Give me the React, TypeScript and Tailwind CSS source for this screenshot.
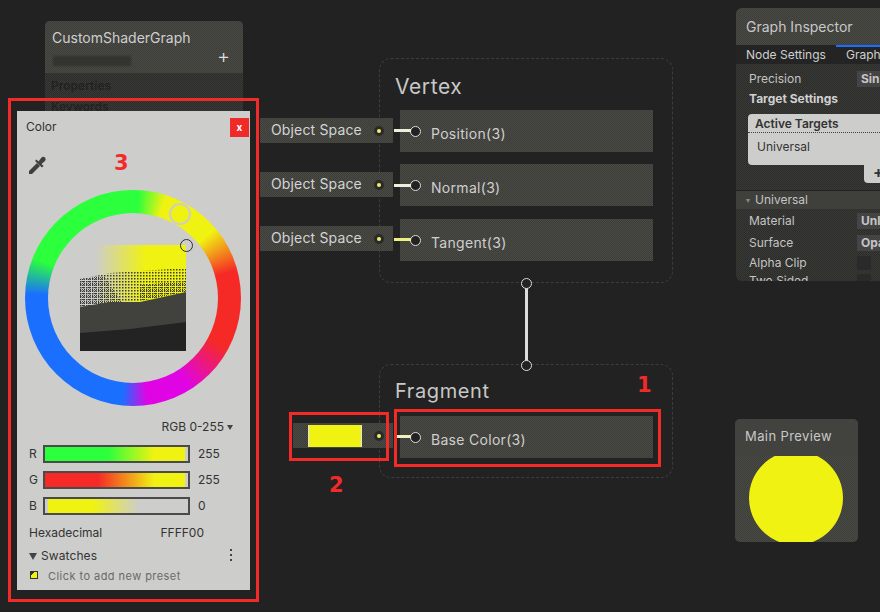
import React from "react";

// 1px checker standing in for the dithered panels of the capture
const panel =
  "bg-[repeating-conic-gradient(#4b4b46_0_25%,#3c3c38_0_50%)] bg-[length:2px_2px]";
const darkPanel =
  "bg-[repeating-conic-gradient(#3a3a37_0_25%,#2b2b29_0_50%)] bg-[length:2px_2px]";

function Port({ className = "" }: { className?: string }) {
  return (
    <span
      className={`block w-[11px] h-[11px] rounded-full border-[1.5px] border-[#dcdcdc] bg-[#222] shrink-0 ${className}`}
    />
  );
}

function OutDot({ className = "" }: { className?: string }) {
  return (
    <span
      className={`absolute w-[10px] h-[10px] rounded-full bg-[#2a2a2a] flex items-center justify-center ${className}`}
    >
      <span className="w-[4px] h-[4px] rounded-full bg-[#f0f060]" />
    </span>
  );
}

function BlockRow({ label, className = "" }: { label: string; className?: string }) {
  return (
    <div className={`${panel} h-[42px] flex items-center pl-[10px] gap-[10px] ${className}`}>
      <Port />
      <span className="text-[14px] text-[#cfcfcf] tracking-[0.3px] pt-[5px]">{label}</span>
    </div>
  );
}

function ObjectSpaceNode({ className }: { className: string }) {
  return (
    <div className={`absolute left-[260px] w-[133px] h-[25px] ${panel} flex items-center pl-[11px] pb-[3px] ${className}`}>
      <span className="text-[14px] text-[#d4d4d4] tracking-[0.15px]">Object Space</span>
      <OutDot className="left-[114px] top-[8px]" />
    </div>
  );
}

function Slider({ label, value, fill, gap }: { label: string; value: string; fill: string; gap?: boolean }) {
  return (
    <div className="flex items-center h-[18px]">
      <span className="w-[26px] pl-[12px] text-[12px] text-[#333]">{label}</span>
      <div className={`w-[147px] h-[18px] border-2 border-[#4a4a4a] ${gap ? "pl-[3px]" : "pr-[3px]"}`}>
        <div className={`h-full ${fill}`} />
      </div>
      <span className="pl-[8px] text-[12px] text-[#333]">{value}</span>
    </div>
  );
}

function ColorSquare() {
  return (
    <svg width="106" height="106" viewBox="0 0 106 106" className="block">
      <defs>
        <linearGradient id="sv" x1="0" y1="0" x2="1" y2="0">
          <stop offset="0.15" stopColor="#cdcdcb" />
          <stop offset="0.62" stopColor="#f0f212" />
        </linearGradient>
        <pattern id="dots" width="3" height="3" patternUnits="userSpaceOnUse">
          <rect width="1.5" height="1.5" fill="#3c3c38" />
        </pattern>
        <pattern id="dotsDense" width="2" height="2" patternUnits="userSpaceOnUse">
          <rect width="1" height="1" fill="#3c3c38" />
        </pattern>
      </defs>
      <rect width="106" height="106" fill="url(#sv)" />
      <polygon points="0,34 30,28 106,23 106,47 60,56 0,62" fill="url(#dots)" />
      <polygon points="0,34 24,31 42,58 0,62" fill="url(#dotsDense)" />
      <polygon points="60,40 106,36 106,47 60,56" fill="url(#dotsDense)" />
      <polygon points="0,62 30,57 60,57 106,47 106,106 0,106" fill="#41413d" />
      <polygon points="0,88 50,84 106,77 106,106 0,106" fill="#232323" />
    </svg>
  );
}

function ColorPicker() {
  return (
    <div className="absolute left-[17px] top-[111px] w-[233px] h-[479px] bg-[#cdcdcb] flex flex-col">
      <div className="flex justify-between items-start pt-[7px] pr-[1px] pl-[9px] h-[44px]">
        <span className="text-[12px] text-[#333]">Color</span>
        <span className="w-[19px] h-[19px] bg-[#f02a28] text-white text-[10px] font-bold flex items-center justify-center">x</span>
      </div>
      <div className="h-[35px] pl-[12px]">
        <svg width="18" height="19" viewBox="0 0 18 19" className="block mt-[1px]">
          <path d="M0 18 L0 15 L8 7 L11 10 L3 18 Z" fill="#3f3f3f" />
          <path d="M6 5 L7.5 3.5 L9.5 5.5 L12.5 1.5 Q14.5 0 16 1.5 Q17.5 3 16 5 L12.5 8 L14.5 10 L13 11.5 Z" fill="#3f3f3f" />
        </svg>
      </div>
      <div className="relative ml-[8px] w-[216px] h-[216px] rounded-full bg-[conic-gradient(#2cff3c_0deg,#2cff3c_3deg,#f0f212_18deg,#f0f212_50deg,#f52a26_75deg,#f52a26_118deg,#e004e4_148deg,#e004e4_172deg,#1a6fff_186deg,#1a6fff_272deg,#2cff3c_292deg,#2cff3c_360deg)] flex items-center justify-center">
        <div className="w-[170px] h-[170px] rounded-full bg-[#cdcdcb] flex items-center justify-center">
          <ColorSquare />
        </div>
        <span className="absolute left-[144px] top-[13px] w-[22px] h-[22px] rounded-full border-2 border-[#cdcdcb] bg-[#f0f212]" />
        <span className="absolute left-[155px] top-[49px] w-[13px] h-[13px] rounded-full border-[1.5px] border-[#2f2f2f]" />
      </div>
      <div className="flex justify-end items-center mt-[13px] pr-[17px] h-[16px]">
        <span className="text-[12px] text-[#333]">RGB 0-255</span>
        <span className="ml-[3px] w-0 h-0 border-l-[3.5px] border-r-[3.5px] border-t-[5px] border-l-transparent border-r-transparent border-t-[#444]" />
      </div>
      <div className="flex flex-col gap-[8px] mt-[10px]">
        <Slider label="R" value="255" fill="bg-[linear-gradient(to_right,#2cff3c_45%,#f0f212_78%)]" />
        <Slider label="G" value="255" fill="bg-[linear-gradient(to_right,#f52a26_38%,#f0f212_78%)]" />
        <Slider label="B" value="0" gap fill="bg-[linear-gradient(to_right,#f0f212_32%,#cdcdcb_65%)]" />
      </div>
      <div className="flex items-center justify-between mt-[11px] pl-[12px] pr-[46px] h-[14px] text-[12px] text-[#333]">
        <span>Hexadecimal</span>
        <span>FFFF00</span>
      </div>
      <div className="flex items-center mt-[9px] pl-[12px] pr-[17px] h-[14px]">
        <span className="w-0 h-0 border-l-[4px] border-r-[4px] border-t-[7px] border-l-transparent border-r-transparent border-t-[#444]" />
        <span className="ml-[4px] text-[12px] tracking-[0.1px] text-[#333]">Swatches</span>
        <svg width="4" height="12" viewBox="0 0 4 12" className="ml-auto -mt-[3px]">
          <rect x="1" y="0" width="2" height="2" fill="#444" />
          <rect x="1" y="5" width="2" height="2" fill="#444" />
          <rect x="1" y="10" width="2" height="2" fill="#444" />
        </svg>
      </div>
      <div className="flex items-center mt-[6px] pl-[13px] h-[14px]">
        <span className="w-[8px] h-[8px] -mt-[3px] border border-[#333] bg-[linear-gradient(135deg,#333_30%,#f0f212_30%)]" />
        <span className="ml-[10px] text-[11px] tracking-[0.45px] text-[#6a6a6a]">Click to add new preset</span>
      </div>
    </div>
  );
}

function Inspector() {
  return (
    <div className="absolute left-[736px] top-[8px] w-[160px] h-[273px] rounded-[6px] overflow-hidden bg-[#2c2c2a] flex flex-col">
      <div className={`${panel} h-[37px] shrink-0 pl-[10px] flex items-center text-[14px] text-[#c8c8c8]`}>Graph Inspector</div>
      <div className="relative h-[19px] shrink-0 bg-[#242424] flex items-center text-[12px] text-[#cfcfcf]">
        <span className="pl-[10px] w-[100px]">Node Settings</span>
        <span className="pl-[10px]">Graph</span>
        <span className="absolute left-[100px] top-0 right-0 h-[2px] bg-[#1a6fff]" />
      </div>
      <div className={`${darkPanel} flex-1 min-h-0 flex flex-col text-[12px] text-[#c4c4c4]`}>
        <div className="flex items-center justify-between h-[26px] shrink-0 pl-[13px] pt-[3px]">
          <span>Precision</span>
          <span className="w-[39px] h-[16px] pl-[4px] bg-[#444] font-bold leading-[16px]">Sin</span>
        </div>
        <div className="h-[17px] shrink-0 pl-[13px] font-bold text-[#d0d0d0]">Target Settings</div>
        <div className="mt-[7px] ml-[12px] h-[51px] shrink-0 rounded-l-[4px] bg-[#cdcdcb] text-[#333]">
          <div className="h-[19px] pl-[7px] font-semibold leading-[19px] border-b border-dotted border-[#444]">Active Targets</div>
          <div className="pl-[9px] pt-[5px]">Universal</div>
        </div>
        <div className="ml-[128px] h-[18px] shrink-0 rounded-bl-[4px] bg-[#cdcdcb] text-[#333] font-bold text-[16px] leading-[14px] pl-[9px]">+</div>
        <div className="mt-[7px] h-[19px] shrink-0 bg-[#3f3f3c] pl-[10px] flex items-center gap-[5px] border-t border-[#222]">
          <span className="text-[8px] text-[#888]">▾</span>
          <span>Universal</span>
        </div>
        <div className="flex items-center justify-between h-[22px] shrink-0 mt-[1px] pl-[13px]">
          <span>Material</span>
          <span className="w-[39px] h-[16px] pl-[4px] bg-[#444] font-bold leading-[16px]">Unl</span>
        </div>
        <div className="flex items-center justify-between h-[22px] shrink-0 pl-[13px]">
          <span>Surface</span>
          <span className="w-[39px] h-[16px] pl-[4px] bg-[#444] font-bold leading-[16px]">Opa</span>
        </div>
        <div className="flex items-center justify-between h-[18px] shrink-0 pl-[13px]">
          <span>Alpha Clip</span>
          <span className="w-[14px] h-[14px] mr-[25px] bg-[#2a2a2a]" />
        </div>
        <div className="flex items-center justify-between h-[18px] shrink-0 pl-[13px]">
          <span>Two Sided</span>
          <span className="w-[14px] h-[14px] mr-[25px] bg-[#2a2a2a]" />
        </div>
      </div>
    </div>
  );
}

export default function App() {
  return (
    <div className="relative w-[880px] h-[612px] overflow-hidden bg-[#222222] font-['Inter',sans-serif]">
      {/* blackboard, mostly hidden behind the picker */}
      <div className={`absolute left-[45px] top-[21px] w-[198px] h-[100px] rounded-t-[5px] ${darkPanel}`}>
        <div className={`${panel} relative h-[52px] pl-[7px] pt-[6px] rounded-t-[5px] text-[14px] text-[#cfcfcf]`}>
          CustomShaderGraph
          <span className="absolute left-[8px] top-[35px] w-[78px] h-[10px] bg-[#33332f] blur-[1px]" />
          <span className="absolute right-[13px] top-[20px] text-[20px] font-light text-[#ddd]">+</span>
        </div>
        <div className="pl-[6px] pt-[2px] text-[12px] font-semibold text-[#222] leading-[21px]">
          Properties
          <br />
          Keywords
        </div>
      </div>

      {/* vertex block */}
      <div className="absolute left-[379px] top-[58px] w-[294px] h-[225px] rounded-[12px] border border-dashed border-[#3d3d3d] pl-[20px] pr-[19px]">
        <div className="h-[51px] -ml-[5px] pt-[12px] text-[21px] tracking-[0.6px] text-[#c8c8c8]">Vertex</div>
        <div className="flex flex-col gap-[12px]">
          <BlockRow label="Position(3)" />
          <BlockRow label="Normal(3)" />
          <BlockRow label="Tangent(3)" className="mt-[1px]" />
        </div>
      </div>

      {/* fragment block */}
      <div className="absolute left-[379px] top-[364px] w-[294px] h-[114px] rounded-[12px] border border-dashed border-[#3d3d3d] pl-[20px] pr-[19px]">
        <div className="h-[51px] -ml-[5px] pt-[11px] text-[20px] tracking-[0.6px] text-[#c8c8c8]">Fragment</div>
        <BlockRow label="Base Color(3)" />
      </div>

      <ObjectSpaceNode className="top-[118px]" />
      <ObjectSpaceNode className="top-[172px]" />
      <ObjectSpaceNode className="top-[226px]" />

      {/* wires */}
      <div className="absolute left-[394px] top-[129px] w-[17px] h-[3px] bg-[#f0f0d8]" />
      <div className="absolute left-[394px] top-[184px] w-[17px] h-[3px] bg-[#f0f0d8]" />
      <div className="absolute left-[394px] top-[238px] w-[17px] h-[3px] bg-[#f0f080]" />
      <div className="absolute left-[397px] top-[435px] w-[14px] h-[3px] bg-[#f0f0c0]" />
      <div className="absolute left-[525px] top-[286px] w-[3px] h-[76px] bg-[#dcdcdc]" />
      <Port className="absolute left-[521px] top-[278px]" />
      <Port className="absolute left-[521px] top-[360px]" />

      {/* color property node */}
      <div className={`absolute left-[293px] top-[423px] w-[100px] h-[25px] ${panel}`}>
        <div className="absolute left-[15px] top-[2px] w-[54px] h-[22px] bg-[#f0f212] border-x border-[#e4e4e4]" />
        <OutDot className="left-[81px] top-[8px]" />
      </div>

      {/* main preview */}
      <div className={`absolute left-[735px] top-[419px] w-[123px] h-[123px] rounded-[5px] overflow-hidden ${panel}`}>
        <div className="relative z-10 h-[37px] bg-[#42423f] pl-[10px] pb-[2px] flex items-center text-[13px] tracking-[0.4px] text-[#c8c8c8]">Main Preview</div>
        <div className="w-[94px] h-[94px] rounded-full bg-[#f0f212] ml-[14px] -mt-[5px]" />
      </div>

      <Inspector />

      <ColorPicker />

      {/* red annotations */}
      <div className="absolute left-[8px] top-[98px] w-[251px] h-[504px] border-[3px] border-[#f22a28]" />
      <div className="absolute left-[394px] top-[409px] w-[267px] h-[58px] border-[3px] border-[#f22a28]" />
      <div className="absolute left-[289px] top-[412px] w-[100px] h-[49px] border-[3px] border-[#f22a28]" />
      <span className="absolute left-[114px] top-[148px] font-['DejaVu_Sans',sans-serif] font-bold text-[21px] text-[#f22a28]">3</span>
      <span className="absolute left-[637px] top-[370px] font-['DejaVu_Sans',sans-serif] font-bold text-[21px] text-[#f22a28]">1</span>
      <span className="absolute left-[329px] top-[470px] font-['DejaVu_Sans',sans-serif] font-bold text-[21px] text-[#f22a28]">2</span>
    </div>
  );
}
